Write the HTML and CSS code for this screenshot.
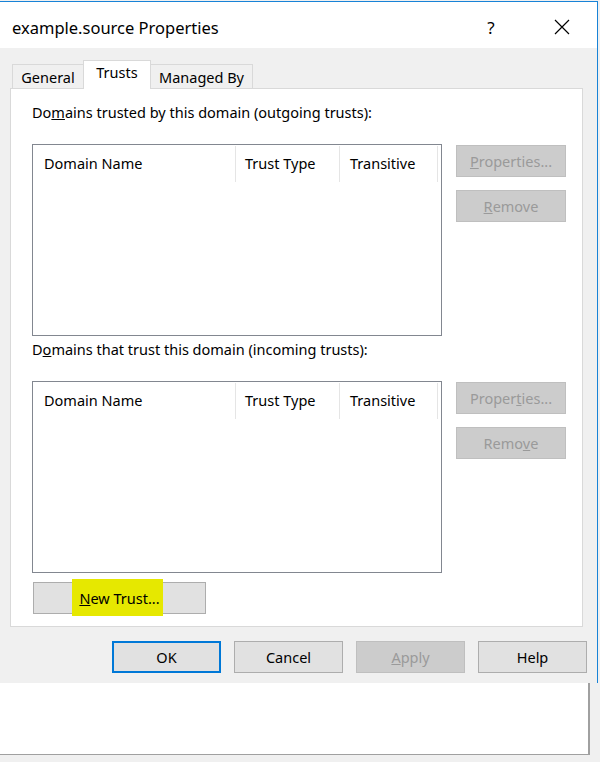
FILE: index.html
```html
<!DOCTYPE html>
<html lang="en">
<head>
<meta charset="UTF-8">
<title>example.source Properties</title>
<link rel="stylesheet" href="styles.css">
</head>
<body>
<div class="window">
    <div class="titlebar">
        <span class="title">example.source Properties</span>
        <span class="help-btn">?</span>
        <span class="close-btn">
            <svg width="16" height="16" viewBox="0 0 16 16"><path d="M1 1 L15 15 M15 1 L1 15" stroke="#000" stroke-width="1.2" fill="none"/></svg>
        </span>
    </div>
    <div class="dialog">
        <div class="tabs">
            <div class="tab tab-general">General</div>
            <div class="tab tab-trusts active">Trusts</div>
            <div class="tab tab-managed">Managed By</div>
        </div>
        <div class="panel">
            <div class="caption">Do<u>m</u>ains trusted by this domain (outgoing trusts):</div>
            <div class="section">
                <div class="list">
                    <div class="list-head">
                        <div class="col col-name">Domain Name</div>
                        <div class="col col-type">Trust Type</div>
                        <div class="col col-trans">Transitive</div>
                    </div>
                </div>
                <div class="side">
                    <button class="btn disabled"><u>P</u>roperties...</button>
                    <button class="btn disabled"><u>R</u>emove</button>
                </div>
            </div>
            <div class="caption second">D<u>o</u>mains that trust this domain (incoming trusts):</div>
            <div class="section">
                <div class="list">
                    <div class="list-head">
                        <div class="col col-name">Domain Name</div>
                        <div class="col col-type">Trust Type</div>
                        <div class="col col-trans">Transitive</div>
                    </div>
                </div>
                <div class="side">
                    <button class="btn disabled">Proper<u>t</u>ies...</button>
                    <button class="btn disabled">Remo<u>v</u>e</button>
                </div>
            </div>
            <button class="btn new-trust"><span class="marker"><u>N</u>ew Trust...</span></button>
        </div>
        <div class="actions">
            <button class="btn default">OK</button>
            <button class="btn">Cancel</button>
            <button class="btn disabled"><u>A</u>pply</button>
            <button class="btn">Help</button>
        </div>
    </div>
</div>
<div class="backdrop">
    <div class="behind"></div>
</div>
</body>
</html>
```

FILE: styles.css
```css
body {
    margin: 0;
    width: 600px;
    height: 762px;
    overflow: hidden;
    background: #f0f0f0;
    font-family: "Noto Sans", "Open Sans", Arial, sans-serif;
    font-size: 14.5px;
    color: #000;
}
.window {
    width: 597px;
    border-top: 1px solid #1883d7;
    border-right: 1px solid #1883d7;
    margin-top: 1px;
}
.titlebar {
    height: 46px;
    padding-top: 4px;
    box-sizing: border-box;
    background: #fff;
    display: flex;
    align-items: center;
}
.title {
    flex: 1;
    padding-left: 12px;
    font-size: 16.5px;
}
.help-btn {
    width: 20px;
    font-size: 17px;
    margin-right: 53px;
    text-align: center;
}
.close-btn {
    display: flex;
    margin-right: 27px;
}
.dialog {
    height: 635px;
    background: #f0f0f0;
    padding: 12px 10px 0 10px;
    box-sizing: border-box;
}
.tabs {
    display: flex;
    height: 28px;
    padding-left: 2px;
    align-items: flex-end;
}
.tab {
    height: 24px;
    box-sizing: border-box;
    border: 1px solid #d9d9d9;
    border-bottom: none;
    padding-top: 2px;
    margin-right: -1px;
    background: #f0f0f0;
    text-align: center;
}
.tab-general { width: 72px; }
.tab-trusts { width: 68px; }
.tab-managed { width: 103px; }
.tab.active {
    height: 29px;
    margin-bottom: -1px;
    background: #fff;
    padding-top: 1px;
    position: relative;
    z-index: 1;
}
.panel {
    width: 573px;
    height: 539px;
    box-sizing: border-box;
    background: #fff;
    border: 1px solid #d9d9d9;
    padding: 12px 0 0 21px;
}
.caption {
    height: 22px;
    line-height: 22px;
}
.caption.second {
    margin-top: 2px;
}
.section {
    display: flex;
    margin-top: 21px;
}
.list {
    width: 410px;
    height: 192px;
    box-sizing: border-box;
    border: 1px solid #828790;
}
.list-head {
    display: flex;
    height: 37px;
    padding-top: 1px;
    box-sizing: border-box;
}
.col {
    box-sizing: border-box;
    border-right: 1px solid #e5e5e5;
    padding: 7px 0 0 11px;
}
.col-name { width: 203px; }
.col-type { width: 104px; padding-left: 9px; }
.col-trans { width: 98px; padding-left: 10px; }
.side {
    display: flex;
    flex-direction: column;
    gap: 13px;
    margin-left: 14px;
    padding-top: 1px;
}
.btn {
    width: 110px;
    height: 32px;
    box-sizing: border-box;
    border: 1px solid #adadad;
    background: #e1e1e1;
    font-family: inherit;
    font-size: 14.5px;
    color: #000;
    padding: 0;
}
.btn.disabled {
    background: #cccccc;
    border-color: #bfbfbf;
    color: #9a9a9a;
}
.btn.default {
    border: 2px solid #0078d7;
}
.new-trust {
    width: 173px;
    margin-top: 9px;
    margin-left: 1px;
}
.marker {
    background: #e6e800;
    padding: 9px 3px 8px 7px;
    margin-left: -4px;
}
.actions {
    display: flex;
    justify-content: flex-end;
    gap: 13px;
    margin-top: 14px;
}
.actions .btn {
    width: 109px;
}
.backdrop {
    height: 78px;
    background: #f0f0f0;
}
.behind {
    width: 588px;
    height: 71px;
    background: #fff;
    border-right: 2px solid #a0a0a0;
    border-bottom: 1px solid #a0a0a0;
}
```
